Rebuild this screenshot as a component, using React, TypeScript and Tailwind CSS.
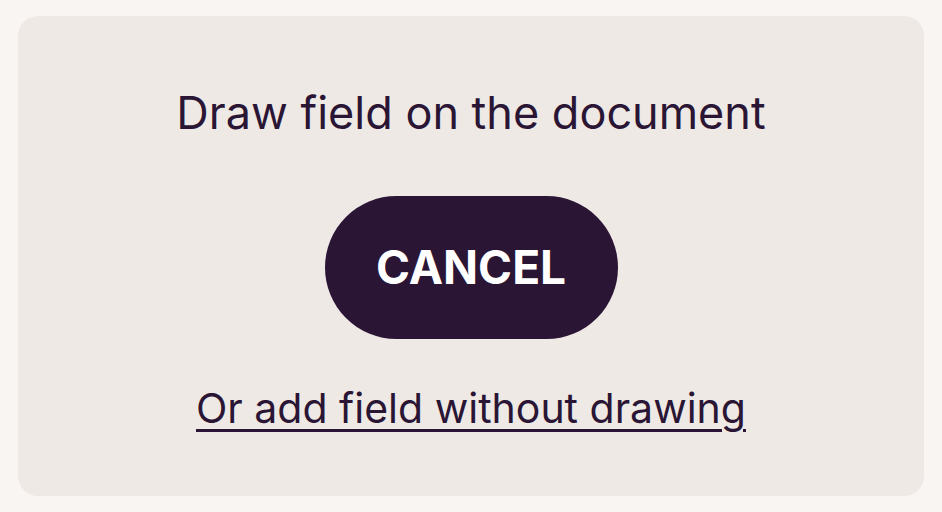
const App = () => {
    return (
        <div className="min-h-screen w-full bg-[#f9f5f3] p-[16px_18px] font-['Inter',sans-serif]">
            <div className="flex h-[480px] flex-col items-center rounded-[20px] bg-[#efe9e6] pt-[71px] text-[#2a1634]">
                <h2 className="text-[45px] leading-[52px] font-normal">
                    Draw field on the document
                </h2>
                <button className="mt-[57px] h-[143px] w-[293px] rounded-full bg-[#2a1535] text-[46px] font-bold text-white">
                    CANCEL
                </button>
                <a
                    href="#"
                    className="mt-[45px] text-[41px] leading-[48px] underline decoration-[3px] underline-offset-[6px]"
                >
                    Or add field without drawing
                </a>
            </div>
        </div>
    );
};

export default App;
